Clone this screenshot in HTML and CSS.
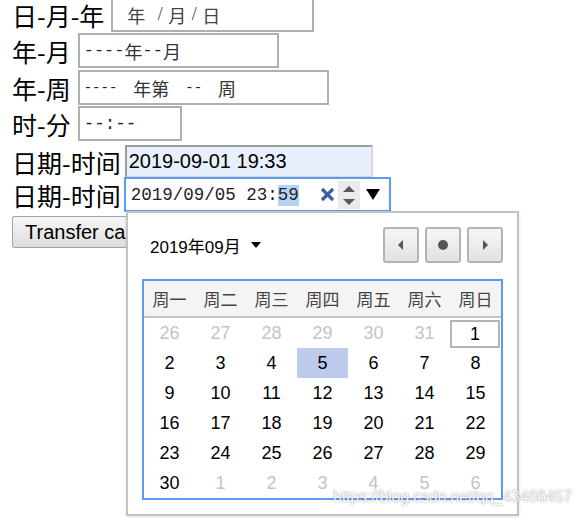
FILE: index.html
```html
<!DOCTYPE html>
<html lang="zh">
<head>
<meta charset="utf-8">
<title>日期输入</title>
<link rel="stylesheet" href="styles.css">
</head>
<body>
<div class="page">
  <div class="form">
    <div class="row r1">
      <span class="lbl">日-月-年</span>
      <div class="field f1">
        <span class="cj">年</span><span class="sep s-first">/</span><span class="cj">月</span><span class="sep">/</span><span class="cj">日</span>
      </div>
    </div>
    <div class="row r2">
      <span class="lbl">年-月</span>
      <div class="field f2">
        <span class="dash">----</span><span class="cj">年</span><span class="dash">--</span><span class="cj">月</span>
      </div>
    </div>
    <div class="row r3">
      <span class="lbl">年-周</span>
      <div class="field f3">
        <span class="dash d-sm">----</span><span class="cj gap-l">年第</span><span class="dash d-sm gap-l">--</span><span class="cj gap-l">周</span>
      </div>
    </div>
    <div class="row r4">
      <span class="lbl">时-分</span>
      <div class="field f4">
        <span class="dash d-lg">--:--</span>
      </div>
    </div>
    <div class="row r5">
      <span class="lbl lbl-dt">日期-时间</span>
      <div class="field f5">2019-09-01 19:33</div>
    </div>
    <div class="row r6">
      <span class="lbl lbl-dt2">日期-时间</span>
      <div class="field f6">
        <span class="dt">2019/09/05 23:<span class="sel">59</span></span>
        <span class="clear">
          <svg width="15" height="15" viewBox="0 0 15 15"><path d="M2 2 L13 13 M13 2 L2 13" stroke="#3c5f9e" stroke-width="3.2"/></svg>
        </span>
        <span class="spin">
          <svg width="22" height="28" viewBox="0 0 22 28"><path d="M5 11 L11 5 L17 11 Z" fill="#5a5a5a"/><path d="M5 18 L11 24 L17 18 Z" fill="#5a5a5a"/></svg>
        </span>
        <span class="drop">
          <svg width="14" height="11" viewBox="0 0 14 11"><path d="M0 0 L14 0 L7 11 Z" fill="#000"/></svg>
        </span>
      </div>
    </div>
    <button class="btn">Transfer case</button>
  </div>

  <div class="popup">
    <div class="phead">
      <div class="month">2019年09月
        <svg class="mtri" width="10" height="6" viewBox="0 0 10 6"><path d="M0 0 L10 0 L5 6 Z" fill="#000"/></svg>
      </div>
      <div class="nav">
        <span class="nbtn"><svg width="6" height="10" viewBox="0 0 6 10"><path d="M5 0 L5 10 L0 5 Z" fill="#555"/></svg></span>
        <span class="nbtn"><svg width="12" height="12" viewBox="0 0 12 12"><circle cx="6" cy="6" r="5" fill="#555"/></svg></span>
        <span class="nbtn"><svg width="6" height="10" viewBox="0 0 6 10"><path d="M1 0 L1 10 L6 5 Z" fill="#555"/></svg></span>
      </div>
    </div>
    <div class="cal">
      <div class="wk">
        <span>周一</span><span>周二</span><span>周三</span><span>周四</span><span>周五</span><span>周六</span><span>周日</span>
      </div>
      <div class="days">
        <span class="o">26</span><span class="o">27</span><span class="o">28</span><span class="o">29</span><span class="o">30</span><span class="o">31</span><span class="today">1</span>
        <span>2</span><span>3</span><span>4</span><span class="selday">5</span><span>6</span><span>7</span><span>8</span>
        <span>9</span><span>10</span><span>11</span><span>12</span><span>13</span><span>14</span><span>15</span>
        <span>16</span><span>17</span><span>18</span><span>19</span><span>20</span><span>21</span><span>22</span>
        <span>23</span><span>24</span><span>25</span><span>26</span><span>27</span><span>28</span><span>29</span>
        <span>30</span><span class="o">1</span><span class="o">2</span><span class="o">3</span><span class="o">4</span><span class="o">5</span><span class="o">6</span>
      </div>
    </div>
  </div>

  <div class="wm">https://blog.csdn.net/qq_43466457</div>
</div>
</body>
</html>
```

FILE: styles.css
```css
* { box-sizing: border-box; }
html, body { margin: 0; padding: 0; background: #fff; }
body {
  width: 584px;
  height: 518px;
  overflow: hidden;
  font-family: "Liberation Sans", Arial, "Noto Sans CJK SC", sans-serif;
  color: #000;
}
.page { position: relative; display: flow-root; height: 518px; padding-left: 12px; }

.form { display: flex; flex-direction: column; align-items: flex-start; margin-top: -3px; }
.row { display: flex; align-items: center; }
.r2 { margin-top: 1px; }
.r3 { margin-top: 2px; }
.r4 { margin-top: 1px; }
.r5 { margin-top: 4px; }
.r6 { margin-top: -1px; }

.lbl {
  font-family: "Noto Sans CJK SC", sans-serif;
  font-size: 25px;
  line-height: 30px;
  margin-right: 7px;
  white-space: nowrap;
}
.lbl-dt { margin-right: 4px; }
.lbl-dt2 { margin-right: 3px; }

.field {
  height: 35px;
  border: 2px solid #b0b0b0;
  display: flex;
  align-items: center;
  padding-left: 4px;
  color: #333;
  font-family: "Noto Sans CJK SC", sans-serif;
  font-size: 18px;
  white-space: nowrap;
  background: #fff;
}
.f1 { width: 203px; padding-left: 14px; color: #444; }
.f2 { width: 201px; }
.f3 { width: 251px; }
.f4 { width: 104px; }
.cj { font-family: "Noto Sans CJK SC", sans-serif; font-size: 18px; line-height: 20px; }
.sep { display: inline-block; width: 16px; text-align: center; font-family: "Liberation Serif", serif; font-size: 18px; }
.s-first { margin-left: 7px; }
.dash { font-family: "Liberation Mono", monospace; font-size: 17px; color: #222; }
.d-sm { font-size: 14px; }
.d-lg { font-size: 17.5px; }
.gap-l { margin-left: 16px; }

.f5 {
  width: 248px;
  height: 33px;
  background: #e8f0fe;
  border-width: 2px;
  border-style: solid;
  border-color: #9c9c9c #d8d8d8 #d8d8d8 #9c9c9c;
  font-family: "Liberation Sans", Arial, sans-serif;
  font-size: 20px;
  color: #000;
  padding-left: 2px;
}

.f6 {
  width: 267px;
  border: 2px solid #5c9bf3;
  padding-left: 5px;
  padding-right: 7px;
  color: #222;
}
.dt { font-family: "Liberation Mono", monospace; font-size: 17.5px; line-height: 22px; }
.sel { background: #b5d2f6; display: inline-block; line-height: 21px; }
.clear { margin-left: 21px; display: flex; }
.spin { margin-left: 3px; display: flex; background: #ebebeb; }
.drop { margin-left: 6px; display: flex; }

.btn {
  margin-top: 4px;
  height: 32px;
  padding: 0 12px;
  border: 1px solid #a3a3a3;
  border-radius: 2px;
  background: linear-gradient(#f7f7f7, #dddddd);
  font-family: "Liberation Sans", Arial, sans-serif;
  font-size: 20px;
  color: #000;
  white-space: nowrap;
}

.popup {
  position: absolute;
  left: 126px;
  top: 211px;
  width: 393px;
  height: 305px;
  border: 2px solid #c2c2c2;
  background: #fff;
  padding: 14px;
  box-shadow: 0 1px 3px rgba(0,0,0,0.12);
}
.phead { display: flex; justify-content: space-between; align-items: center; height: 36px; margin-bottom: 16px; }
.month {
  padding-left: 8px;
  font-family: "Liberation Sans", Arial, "Noto Sans CJK SC", sans-serif;
  font-size: 17px;
  display: flex;
  align-items: center;
}
.mtri { margin-left: 10px; }
.nav { display: flex; gap: 6px; }
.nbtn {
  width: 36px;
  height: 36px;
  border: 2px solid #b3b3b3;
  border-radius: 3px;
  background: linear-gradient(#f6f6f6, #e2e2e2);
  display: flex;
  align-items: center;
  justify-content: center;
}

.cal { border: 2px solid #5c9bf5; width: 361px; }
.wk {
  display: grid;
  grid-template-columns: repeat(7, 51px);
  height: 37px;
  background: #f4f4f4;
  border-bottom: 2px solid #c6c6c6;
  font-family: "Noto Sans CJK SC", sans-serif;
  font-size: 17px;
  color: #444;
}
.wk span { display: flex; align-items: center; justify-content: center; }
.days {
  display: grid;
  grid-template-columns: repeat(7, 51px);
  grid-auto-rows: 30px;
  font-family: "Liberation Sans", Arial, sans-serif;
  font-size: 18px;
}
.days span { display: flex; align-items: center; justify-content: center; }
.days .o { color: #c4c4c4; }
.days .today { border: 2px solid #b5b5b5; margin: 2px 1px 0 0; }
.days .selday { background: #bccbeb; }

.wm {
  position: absolute;
  left: 333px;
  top: 488px;
  font-family: "Liberation Sans", Arial, sans-serif;
  font-size: 16px;
  color: rgba(255,255,255,0.92);
  text-shadow: 0 0 2px rgba(0,0,0,0.45);
  letter-spacing: -0.2px;
  white-space: nowrap;
}
```
